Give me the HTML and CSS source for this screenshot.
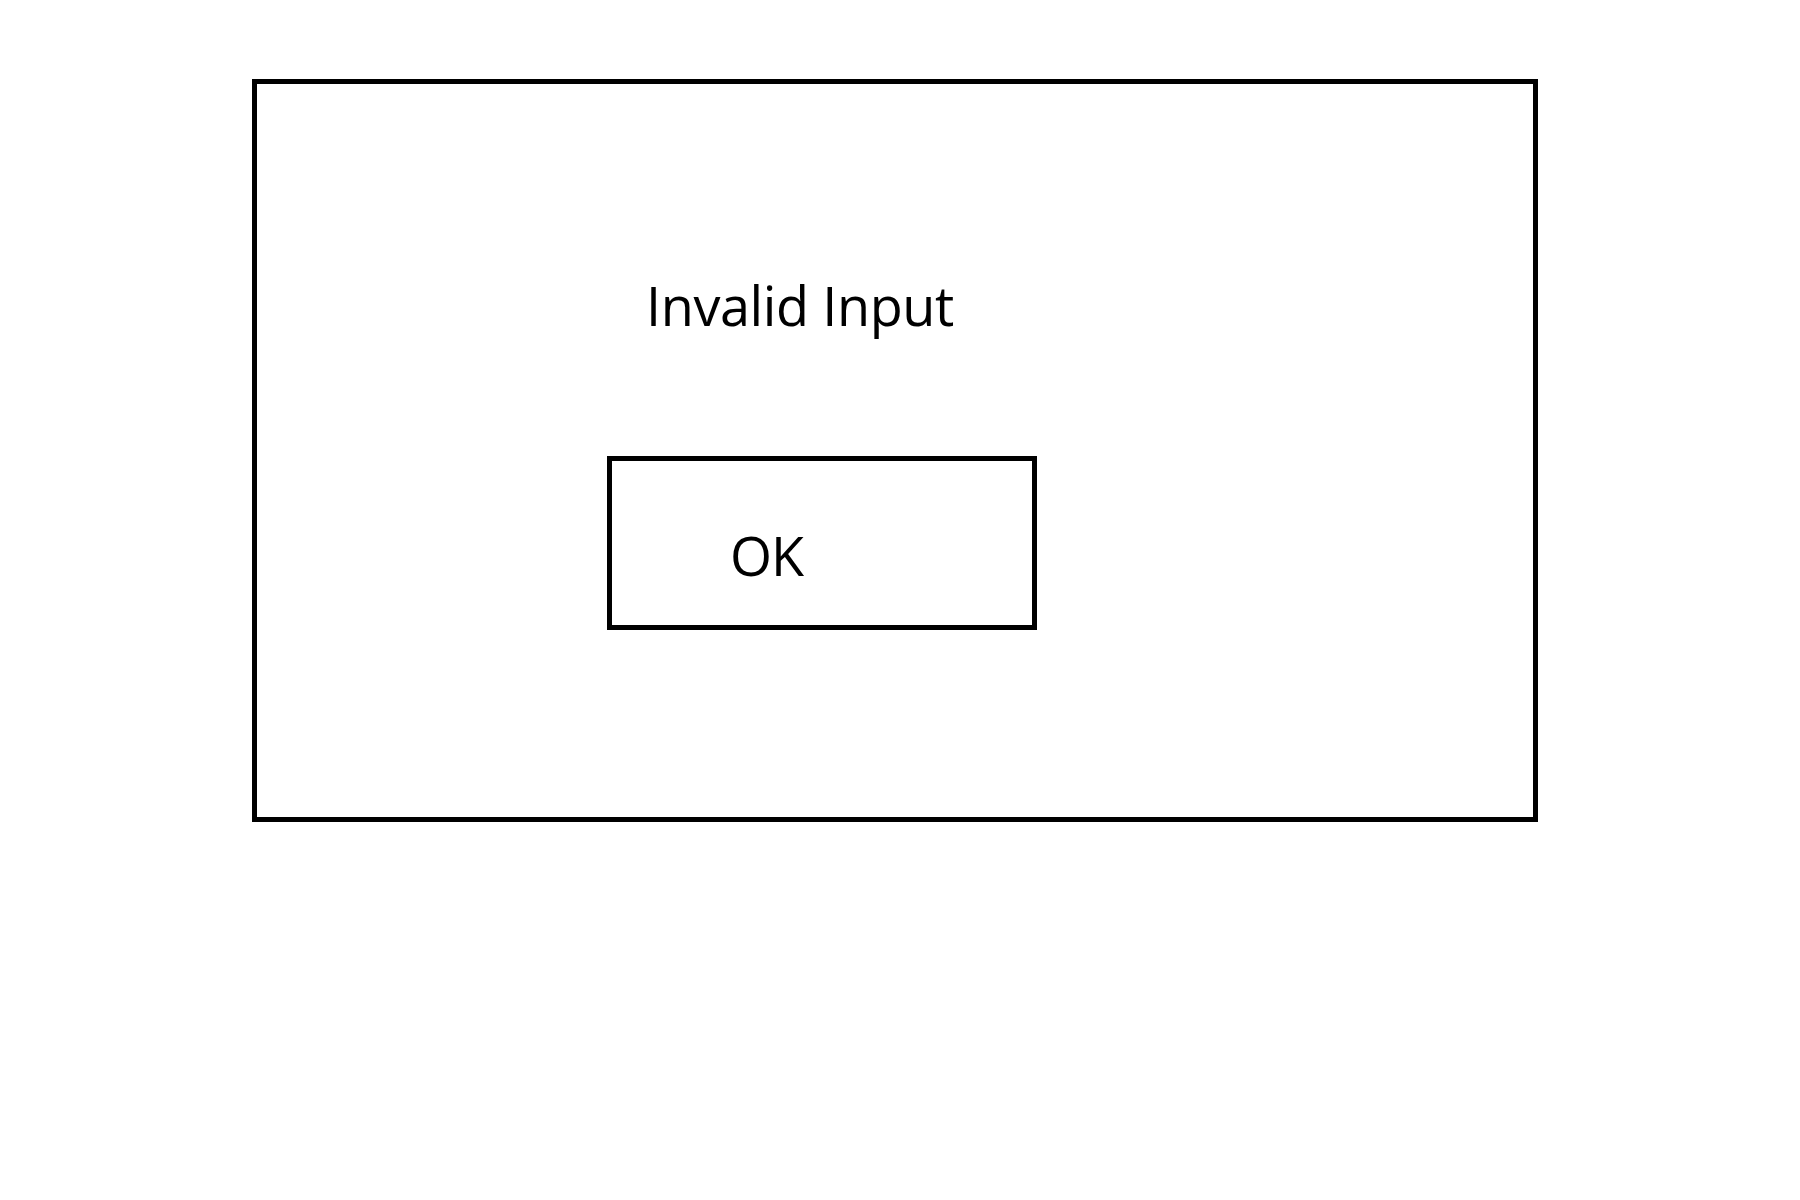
FILE: index.html
```html
<!DOCTYPE html>
<html lang="en">
<head>
<meta charset="utf-8">
<title>Invalid Input</title>
<link rel="stylesheet" href="styles.css">
</head>
<body>
<div class="dialog">
  <div class="message">Invalid Input</div>
  <div class="ok-button">OK</div>
</div>
</body>
</html>
```

FILE: styles.css
```css
html, body {
  margin: 0;
  padding: 0;
  background: #ffffff;
}

body {
  width: 1800px;
  height: 1200px;
  font-family: "Open Sans", "Noto Sans", sans-serif;
  color: #000000;
}

.dialog {
  box-sizing: border-box;
  margin: 79px 0 0 252px;
  width: 1286px;
  height: 743px;
  border: 5px solid #000000;
  display: flex;
  flex-direction: column;
  align-items: flex-start;
}

.message {
  margin: 194px 0 0 389px;
  font-size: 54px;
  line-height: 54px;
  letter-spacing: -0.4px;
  white-space: nowrap;
}

.ok-button {
  box-sizing: border-box;
  margin: 124px 0 0 350px;
  width: 430px;
  height: 174px;
  border: 5px solid #000000;
  padding: 67px 0 0 118px;
  font-size: 54px;
  line-height: 54px;
  letter-spacing: -1px;
}
```
